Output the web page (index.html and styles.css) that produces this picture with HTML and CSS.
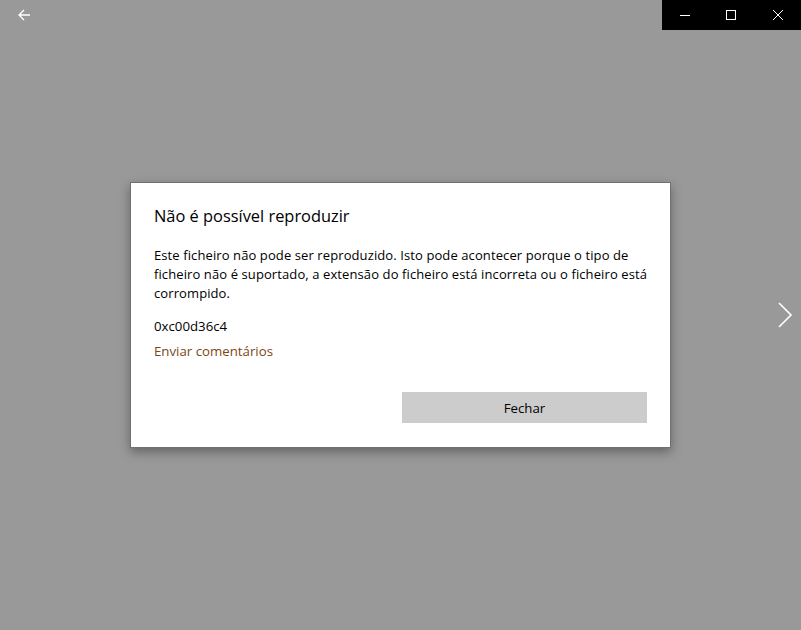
FILE: index.html
```html
<!DOCTYPE html>
<html lang="pt">
<head>
  <meta charset="UTF-8" />
  <title>Filmes e TV</title>
  <link rel="stylesheet" href="styles.css">
</head>
<body>
  <div class="janela">
    <div class="barra">
      <button class="voltar" aria-label="Voltar">
        <svg width="16" height="16" viewBox="0 0 16 16"><path d="M14 8H3M8 3L3 8l5 5" fill="none" stroke="#fff" stroke-width="1.3"/></svg>
      </button>
      <div class="controles">
        <span class="ctrl"><svg width="10" height="10" viewBox="0 0 10 10"><path d="M0 5.5h10" stroke="#fff" stroke-width="1"/></svg></span>
        <span class="ctrl"><svg width="10" height="10" viewBox="0 0 10 10"><rect x="0.5" y="0.5" width="9" height="9" fill="none" stroke="#fff" stroke-width="1"/></svg></span>
        <span class="ctrl"><svg width="10" height="10" viewBox="0 0 10 10"><path d="M0 0l10 10M10 0L0 10" stroke="#fff" stroke-width="1"/></svg></span>
      </div>
    </div>

    <div class="conteudo">
      <div class="dialogo">
        <h1 class="titulo">Não é possível reproduzir</h1>
        <p class="texto">Este ficheiro não pode ser reproduzido. Isto pode acontecer porque o tipo de ficheiro não é suportado, a extensão do ficheiro está incorreta ou o ficheiro está corrompido.</p>
        <p class="codigo">0xc00d36c4</p>
        <a class="link" href="#">Enviar comentários</a>
        <div class="acoes">
          <button class="botao">Fechar</button>
        </div>
      </div>
      <span class="seguinte">
        <svg width="16" height="26" viewBox="0 0 16 26"><path d="M2 1l12 12L2 25" fill="none" stroke="#fff" stroke-width="1.6"/></svg>
      </span>
    </div>
  </div>
</body>
</html>
```

FILE: styles.css
```css
body {
  margin: 0;
  background-color: #999999;
  font-family: "Open Sans", "Noto Sans", sans-serif;
  color: #000;
}

.janela {
  width: 801px;
  height: 630px;
  display: flex;
  flex-direction: column;
}

.barra {
  display: flex;
  justify-content: space-between;
  height: 30px;
}

.voltar {
  width: 48px;
  height: 30px;
  border: none;
  background: none;
  padding: 0;
  display: flex;
  align-items: center;
  justify-content: center;
}

.controles {
  display: flex;
  width: 139px;
  background-color: #000;
}

.ctrl {
  flex: 1;
  display: flex;
  align-items: center;
  justify-content: center;
}

.conteudo {
  position: relative;
  flex: 1;
  display: flex;
  justify-content: center;
  padding-top: 152px;
}

.dialogo {
  width: 493px;
  height: 264px;
  background-color: #fff;
  border: 1px solid #707070;
  padding: 0 23px;
  box-shadow: 0 4px 10px rgba(0, 0, 0, 0.35);
  align-self: flex-start;
}

.titulo {
  font-size: 16.4px;
  font-weight: 400;
  margin: 21px 0 0;
  line-height: 24px;
}

.texto {
  font-size: 13px;
  letter-spacing: 0.1px;
  line-height: 19px;
  margin: 18px -6px 0 0;
}

.codigo {
  font-size: 13.25px;
  line-height: 19px;
  margin: 14px 0 0;
}

.link {
  display: block;
  font-size: 13.25px;
  line-height: 19px;
  margin-top: 6px;
  color: #7c4716;
  text-decoration: none;
}

.acoes {
  display: flex;
  justify-content: flex-end;
  margin-top: 31px;
}

.botao {
  width: 245px;
  height: 31px;
  border: none;
  background-color: #cccccc;
  font-family: "Open Sans", "Noto Sans", sans-serif;
  font-size: 13.25px;
  color: #000;
}

.seguinte {
  position: absolute;
  right: 8px;
  top: 272px;
}
```
